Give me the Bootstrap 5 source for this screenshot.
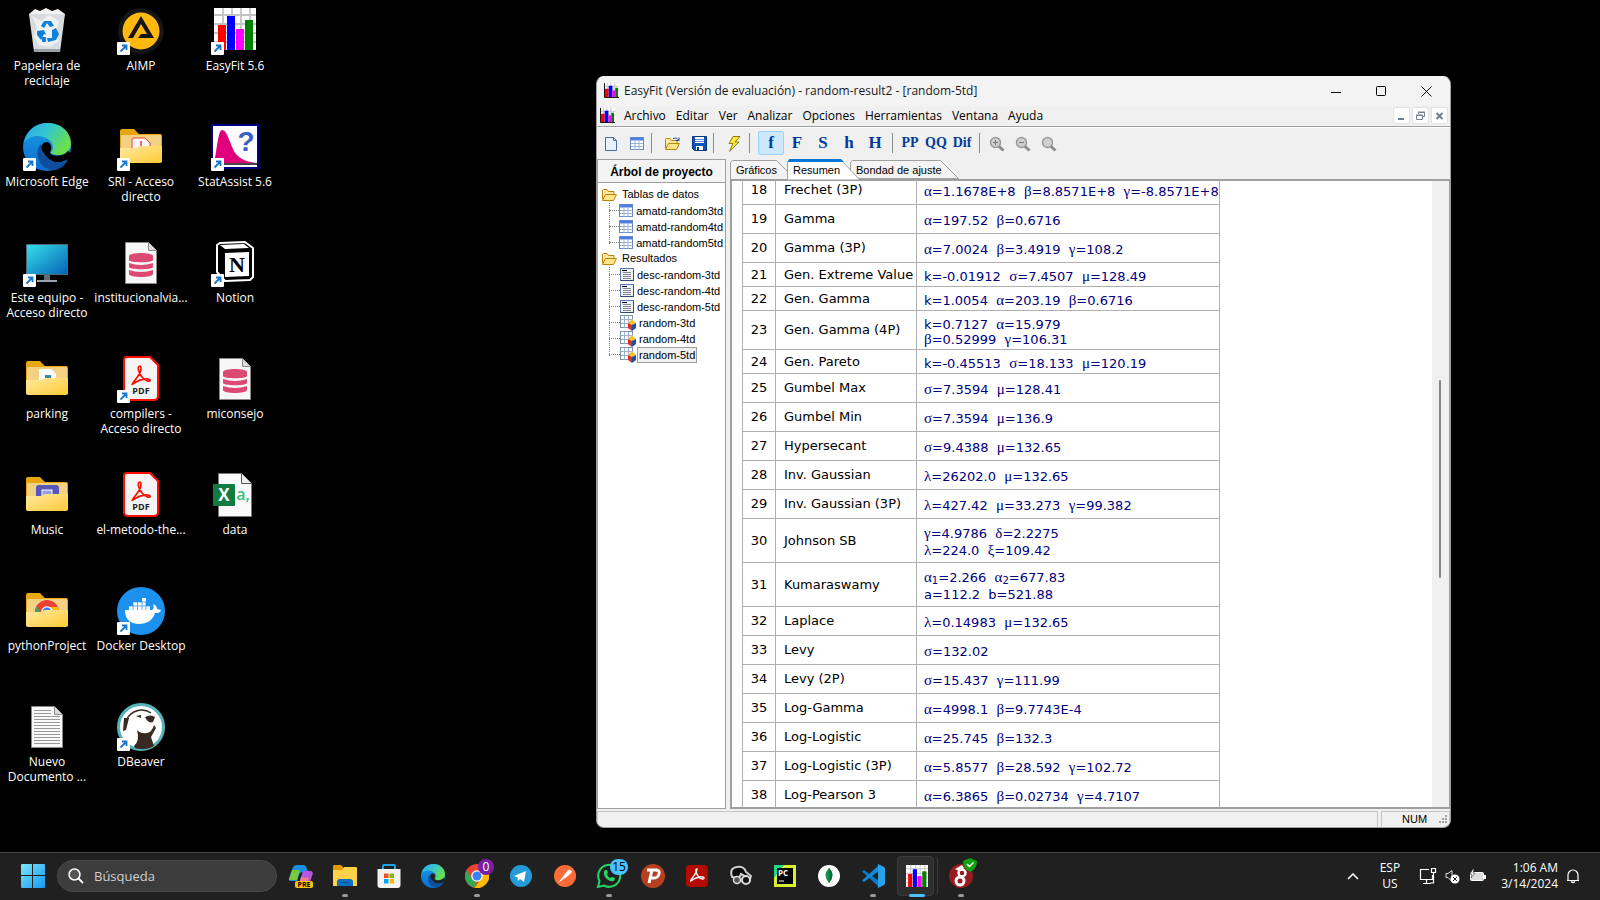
<!DOCTYPE html>
<html lang="es">
<head>
<meta charset="utf-8">
<meta name="viewport" content="width=device-width, initial-scale=1">
<title>EasyFit</title>
<link href="https://cdn.jsdelivr.net/npm/bootstrap@5.3.0/dist/css/bootstrap.min.css" rel="stylesheet">
<style>
  body { background: #000; font-family: "Open Sans", "Noto Sans", sans-serif; font-size: 12px; line-height: 15px; color: #000; }
  button { font: inherit; }
  .flat { border: 0; background: none; padding: 0; color: inherit; }
  /* desktop shortcuts */
  .shortcuts { display: grid; grid-auto-flow: column; grid-template-rows: repeat(7, 116px); grid-auto-columns: 94px; padding-top: 7px; width: max-content; }
  .shortcuts a { color: #fff; text-decoration: none; text-align: center; }
  .shortcuts svg { width: 48px; height: 48px; display: block; margin: 0 auto 3px; }
  .shortcuts .newcol { grid-row-start: 1; }
  .pdflabel { font: bold 9px "Open Sans", sans-serif; text-anchor: middle; fill: #222; }
  /* application window */
  .app { position: absolute; top: 76px; bottom: 24px; left: 37.25%; right: 9.3125%; background: #f0f0f0; border: 1px solid #a0a0a0; border-top-color: #f3f3f3; border-radius: 8px; overflow: hidden; }
  .titlebar { height: 29px; background: #f3f3f3; padding: 0 1px 2px 7px; color: #1a1a1a; gap: 5px; }
  .titlebar .wbtn { width: 45px; height: 27px; }
  .menubar { height: 21px; border-bottom: 1px solid #a0a0a0; padding: 0 2px 0 3px; }
  .menubar .entry { padding: 0 5px; }
  .menubar svg.me-1 { flex: none; }
  .mdis { gap: 2px; }
  .mdi { width: 17px; height: 17px; background: #fff; border: 1px solid #e2e2e2; border-radius: 2px; }
  .tools { height: 32px; border-top: 1px solid #fff; padding: 0 0 1px 1px; }
  .tools button { width: 26px; height: 24px; border: 1px solid transparent; border-radius: 2px; font: bold 17px/20px "Liberation Serif", serif; color: #003c9c; }
  .tools button.on { background: #cce8ff; border-color: #99d1ff; }
  .tools .duo { font-size: 14px; }
  .tools .rule { width: 1px; height: 20px; background: #8c8c8c; margin: 0 4px; }
  .tools .wide { margin: 0 8px 0 1px; }
  .legacy { font-family: "Liberation Sans", Arial, sans-serif; font-size: 11px; }
  .side { width: 129px; border: 1px solid #a0a0a0; background: #fff; margin-right: 4px; flex: none; }
  .side h2 { font-size: 12px; font-weight: bold; height: 23px; line-height: 24px; margin: 0; text-align: center; background: #f4f4f4; border-bottom: 1px solid #a0a0a0; }
  .tree { padding: 4px 0 0; margin: 0; list-style: none; }
  .tree svg { flex: none; }
  .tree .row16 { height: 16px; display: flex; align-items: center; white-space: nowrap; }
  .tree .branch { padding-left: 3px; gap: 5px; }
  .tree ul { margin: 0 0 0 11px; padding: 0; list-style: none; position: relative; }
  .tree ul::before { content: ""; position: absolute; left: 0; top: 0; bottom: 7px; border-left: 1px dotted #808080; }
  .tree ul li::before { content: ""; width: 11px; border-top: 1px dotted #808080; }
  .tree .leaf { padding: 0 1px; margin-left: 1px; line-height: 14px; border: 1px solid transparent; }
  .tree .leaf.on { background: #f0f0f0; border-color: #a0a0a0; }
  .tree svg + .leaf { flex: none; }
  .tabrow { height: 20px; }
  .tabrow button { position: relative; height: 20px; text-align: left; padding: 3px 0 0 6px; }
  .tabrow svg { position: absolute; left: 0; top: 0; overflow: visible; }
  .tabrow span { position: relative; }
  .t1 { width: 57px; } .t2 { width: 63px; } .t3 { width: 108px; }
  .sheet { border: 2px solid #a0a0a0; border-right-width: 1px; background: #fff; min-height: 0; }
  .view { overflow: hidden; padding-left: 10px; }
  .track { width: 17px; background: #f0f0f0; padding: 199px 8px 0 7px; flex: none; }
  .track div { height: 198px; background: #858585; border-radius: 1px; }
  /* result table, scrolled down to row 18 */
  .results { width: 478px; table-layout: fixed; margin-top: -6px; border-collapse: collapse; font: 13px/15px "DejaVu Sans", sans-serif; }
  .results td { border: 1px solid #b0b0b0; height: 29px; padding: 0 0 0 8px; vertical-align: middle; white-space: nowrap; }
  .results .c1 { width: 33px; } .results .c2 { width: 141px; }
  .results td:first-child { text-align: center; padding: 0; }
  .results td:last-child { color: #000080; padding: 4px 0 0 7px; white-space: pre; }
  .results i { font: 15px/15px "Liberation Serif", serif; }
  .results .low td { height: 24px; }
  .results .mid td { height: 39px; }
  .results .tall td { height: 44px; }
  .results .tall td:last-child { line-height: 17px; }
  .results sub { font-size: 10px; line-height: 0; bottom: -2px; }
  .status { height: 18px; padding-top: 2px; gap: 3px; }
  .status div { border: 1px solid #c4c4c4; height: 17px; line-height: 15px; }
  .status .keys { width: 69px; padding-left: 20px; }
  /* taskbar */
  .taskbar { height: 48px; background: #202020; border-top: 1px solid #444; color: #fff; flex: none; padding: 0 16px 1px 17px; }
  .search { width: 220px; height: 32px; background: #3c3c3c; border: 1px solid #4a4a4a; border-radius: 16px; padding: 0 10px; margin-right: 2px; gap: 10px; }
  .search input { background: none; border: 0; outline: 0; color: #fff; font-size: 13px; width: 160px; }
  .search input::placeholder { color: #cfcfcf; opacity: 1; }
  .task { width: 44px; height: 46px; position: relative; }
  .task svg { width: 24px; height: 24px; overflow: visible; }
  .task.run::after { content: ""; position: absolute; left: 19px; bottom: 2px; width: 6px; height: 3px; border-radius: 2px; background: #9a9a9a; }
  .task.cur::after { left: 14px; width: 16px; background: #4cc2ff; }
  .task.cur::before { content: ""; position: absolute; inset: 3px 5px 3px 2px; background: #2d2d2d; border: 1px solid #3a3a3a; border-radius: 4px; box-shadow: 4px 0 0 -1px #202020, 5px 0 0 -1px #3a3a3a; }
  .task.cur svg { position: relative; }
  .count { position: absolute; top: 6px; left: 23px; min-width: 16px; height: 16px; line-height: 16px; border-radius: 8px; font-size: 12px; }
  .count.purple { background: #7a1fa2; }
  .count.sky { background: #4cc2ff; color: #000; min-width: 18px; }
  .hidden-icons { margin-right: 21px; }
  .tray { gap: 8px; margin: 0 15px 0 19px; }
  .stamp { line-height: 16px; }
</style>
</head>
<body class="vh-100 d-flex flex-column overflow-hidden">

<svg width="0" height="0" class="position-absolute" aria-hidden="true">
  <defs>
    <linearGradient id="gFold" x1="0" y1="0" x2="1" y2="1"><stop offset="0" stop-color="#ffe9a3"/><stop offset="1" stop-color="#ffcb33"/></linearGradient>
    <linearGradient id="gScr" x1="0" y1="0" x2="1" y2="1"><stop offset="0" stop-color="#35e0ea"/><stop offset="1" stop-color="#0762b4"/></linearGradient>
    <linearGradient id="gWin" x1="0" y1="0" x2="1" y2="1"><stop offset="0" stop-color="#7ee8fb"/><stop offset="1" stop-color="#1298f0"/></linearGradient>
    <linearGradient id="gEdgeTop" x1="0" y1="0" x2="1" y2=".5"><stop offset="0" stop-color="#2aa7e8"/><stop offset=".5" stop-color="#34c6d0"/><stop offset="1" stop-color="#6be04a"/></linearGradient>
    <linearGradient id="gEdge" x1="0" y1="0" x2="0" y2="1"><stop offset="0" stop-color="#1b9de2"/><stop offset="1" stop-color="#0a6cd0"/></linearGradient>
  </defs>
  <symbol id="arrow" viewBox="0 0 48 48"><rect y="35" width="13" height="13" rx="1" fill="#fff"/><path d="M3.500 44.500 9 39M5 38.500h4.500V43" fill="none" stroke="#1677cc" stroke-width="1.800"/></symbol>
  <symbol id="bars" viewBox="3 1 42 42"><rect x="3" y="1" width="42" height="42" fill="#fff"/><path d="M12 1v42M21 1v42M30 1v42M39 1v42M3 8h42M3 17h42M3 26h42M3 35h42" stroke="#c4c4c4" stroke-width="1.800"/><rect x="7" y="18" width="8" height="25" fill="#f00"/><rect x="16" y="9" width="8" height="34" fill="#00f"/><rect x="25" y="22" width="8" height="21" fill="#f0f"/><rect x="34" y="13" width="8" height="30" fill="#008000"/></symbol>
  <symbol id="minibars" viewBox="0 0 16 16"><rect width="16" height="16" fill="#fff"/><path d="M3.500 0v16M7.500 0v16M11.500 0v16M0 3.500h16M0 7.500h16" stroke="#c4c4c4"/><path d="M.5 0v15.500H16" fill="none" stroke="#000"/><path d="M1 6h4v9H1z" fill="#f00"/><path d="M5 3h4v12H5z" fill="#00f"/><path d="M9 8h3v7H9z" fill="#f0f"/><path d="M12 5h3v10h-3z" fill="#008000"/></symbol>
  <symbol id="edge" viewBox="0 0 48 48"><circle cx="24" cy="24" r="24" fill="url(#gEdge)"/><path d="M1 20C4 7 13 0 25 0c14 0 23 10 23 20 0 8-6 12-12 12-5 0-9-1-8-3 4-4 2-11-5-14C15 11 5 13 1 20z" fill="url(#gEdgeTop)"/><path d="M19 22c2-4 8-4 9 1 1 4-1 5-1 7 3 4 13 4 18-2l3 2-3 6c-8 5-20 5-25-4-2-4-3-7-1-10z" fill="#000"/><path d="M18 21c-8 8-2 27 14 26 6-1 9-4 13-10-5 3-15 4-21-3-4-4-6-8-6-13z" fill="#0f4e9c"/></symbol>
  <symbol id="edgebar" viewBox="0 0 48 48"><circle cx="24" cy="24" r="24" fill="url(#gEdge)"/><path d="M1 20C4 7 13 0 25 0c14 0 23 10 23 20 0 8-6 12-12 12-5 0-9-1-8-3 4-4 2-11-5-14C15 11 5 13 1 20z" fill="url(#gEdgeTop)"/><path d="M19 22c2-4 8-4 9 1 1 4-1 5-1 7 3 4 13 4 18-2l3 2-3 6c-8 5-20 5-25-4-2-4-3-7-1-10z" fill="#202020"/><path d="M18 21c-8 8-2 27 14 26 6-1 9-4 13-10-5 3-15 4-21-3-4-4-6-8-6-13z" fill="#0f4e9c"/></symbol>
  <symbol id="chrome" viewBox="0 0 24 24"><circle cx="12" cy="12" r="12" fill="#ea4335"/><path d="M1.600 6 7 15l5 2-3 6.700A12 12 0 0 1 1.600 6z" fill="#34a853"/><path d="M12 7h11a12 12 0 0 1-13.500 16.800L16.500 14z" fill="#fbbc04"/><circle cx="12" cy="12" r="5.800" fill="#fff"/><circle cx="12" cy="12" r="4.500" fill="#3b82f0"/></symbol>
  <symbol id="fback" viewBox="0 0 48 48"><path d="M3 8q0-2 2-2h12l5 5h21q2 0 2 2v26H3z" fill="#e7a510"/><rect x="4" y="12" width="40" height="20" rx="1" fill="#f3d182"/></symbol>
  <symbol id="ffront" viewBox="0 0 48 48"><path d="M3 25h15l4-2h23v15q0 2-2 2H5q-2 0-2-2z" fill="url(#gFold)"/></symbol>
  <symbol id="db" viewBox="0 0 48 48"><path d="M8.500 3.500h23l8 8v33h-31z" fill="#f7f7f8" stroke="#888"/><path d="M31.500 3.500v8h8" fill="#dcdcdc" stroke="#888"/><g fill="#dc4a74"><path d="M12 17c0-4 24-4 24 0v4c0 3-24 3-24 0z"/><path d="M12 24q12 4 24 0v4c0 3-24 3-24 0z"/><path d="M12 31q12 4 24 0v4c0 4-24 4-24 0z"/></g></symbol>
  <symbol id="pdf" viewBox="0 0 48 48"><path d="M10 2h23l8 8v31q0 4-4 4H11q-4 0-4-4V5q0-3 3-3z" fill="#f5f5f5" stroke="#fa0f00" stroke-width="2"/><path d="M23 11c-3 0-2 6 2 11s9 5 8 3-9-1-14 2-4 3-3 1 8-9 8-14c0-2 0-3-1-3z" fill="none" stroke="#fa0f00" stroke-width="1.700"/></symbol>
  <symbol id="tfolder" viewBox="0 0 16 16"><path d="M1.500 12.500V3.500q0-1 1-1H6l1.500 2H13v3" fill="#ffe9a0" stroke="#b8860b"/><path d="M1.500 13.500 4.500 7.500h11l-3 6z" fill="#ffe48a" stroke="#b8860b"/></symbol>
  <symbol id="tgrid" viewBox="0 0 14 14"><rect x=".5" y=".5" width="13" height="12" fill="#fff" stroke="#6a8bc4"/><path d="M1 2h12" stroke="#4f7fe0" stroke-width="3"/><path d="M1 6.500h12M1 9.500h12M5 4v9M9 4v9" stroke="#9db3d8"/></symbol>
  <symbol id="tdesc" viewBox="0 0 14 14"><rect x=".5" y=".5" width="13" height="12" fill="#eef2fc" stroke="#5a76ae"/><path d="M13.500 2v10.500H1" fill="none" stroke="#34496f"/><path d="M2 2.500h5" stroke="#000"/><path d="M3 4.500h8M3 6.500h8M3 8.500h8M3 10.500h8" stroke="#888"/></symbol>
  <symbol id="tres" viewBox="0 0 16 16"><rect x=".5" y=".5" width="12" height="12" fill="#fff" stroke="#7d92b5"/><path d="M1 4.500h12M1 8.500h12M4.500 1v12M8.500 1v12" stroke="#9db0d0"/><path d="m8 8 4-4 4 4-4 2z" fill="#f2c230"/><path d="m8 8 4 2v6l-4-3z" fill="#d92f1c"/><path d="m16 8-4 2v6l4-3z" fill="#1d4fa8"/></symbol>
  <symbol id="lens" viewBox="0 0 16 16"><path d="m9.500 10 5 4.500" stroke="#8b8b8b" stroke-width="3"/><circle cx="6.500" cy="6.500" r="5" fill="#d0d0d0" stroke="#9a9a9a" stroke-width="1.500"/></symbol>
</svg>

<main class="position-relative flex-grow-1">
  <nav class="shortcuts" aria-label="Escritorio">
    <a href="#"><svg viewBox="0 0 48 48"><path d="M6 7 12 2l5 2 6-3 6 3 6-2 7 5-3 4H9z" fill="#f2f2f2"/><path d="M6 7h36l-5 38H11z" fill="#d9dcdf"/><path d="m9 9 9 5 8-6 10 6-3 12 3 8-9 6-11-2-5-8 3-9z" fill="#eef0f2"/><path d="M11 42h26v3H11z" fill="#9ca1a6"/><g fill="#0b80dc"><path d="m18 19 3-5h7l3 5-4 1-3-4-3 5z"/><path d="m14 24 7-1 2 5-2-1-3 6-4-5z"/><path d="m29 23 4-2 3 6-3 6-8 2-1-4h5z"/><path d="M19 30h4v5h-4z"/></g></svg>Papelera de<br>reciclaje</a>
    <a href="#"><svg viewBox="0 0 48 48"><use href="#edge"/><use href="#arrow"/></svg>Microsoft Edge</a>
    <a href="#"><svg viewBox="0 0 48 48"><rect x="3.500" y="5.500" width="41" height="30" fill="url(#gScr)" stroke="#4c6a7c"/><path d="M21 36h6v6h-6z" fill="#5f6f7a"/><path d="M14 41h20v2H14z" fill="#99a3ab"/><use href="#arrow"/></svg>Este equipo -<br>Acceso directo</a>
    <a href="#"><svg viewBox="0 0 48 48"><use href="#fback"/><path d="M16 14h12l5 5v10H16z" fill="#fff"/><path d="M22 20h6v8h-6z" fill="#3d87a3"/><use href="#ffront"/></svg>parking</a>
    <a href="#"><svg viewBox="0 0 48 48"><use href="#fback"/><rect x="13" y="14" width="23" height="17" rx="3" fill="#5558b8"/><rect x="19" y="19" width="10" height="8" fill="#9a9ce6" stroke="#fff"/><use href="#ffront"/></svg>Music</a>
    <a href="#"><svg viewBox="0 0 48 48"><use href="#fback"/><use href="#chrome" x="12" y="13" width="24" height="24"/><use href="#ffront"/></svg>pythonProject</a>
    <a href="#"><svg viewBox="0 0 48 48"><path d="M8.500 3.500h23l8 8v33h-31z" fill="#fafafa" stroke="#888"/><path d="M31.500 3.500v8h8" fill="#dcdcdc" stroke="#888"/><path d="M11 7.500h17M11 10.500h17M11 13.500h26M11 16.500h26M11 19.500h26M11 22.500h26M11 25.500h26M11 28.500h26M11 31.500h26M11 34.500h26M11 37.500h26M11 40.500h26" stroke="#999"/></svg>Nuevo<br>Documento ...</a>

    <a href="#" class="newcol"><svg viewBox="0 0 48 48"><circle cx="24" cy="24" r="23" fill="#151515"/><circle cx="24" cy="24" r="18.500" fill="#ffb810"/><path d="m24 9 13 22H21l3-4h6l-6-10-8 14h-5z" fill="#151515"/><use href="#arrow"/></svg>AIMP</a>
    <a href="#"><svg viewBox="0 0 48 48"><use href="#fback"/><path d="M15 28V17q0-2 2-2h11l5 5v8z" fill="#f8f8f8" stroke="#f33c30"/><path d="M24 18v6l-5 3m5-3 6 1" fill="none" stroke="#f33c30" stroke-width="1.500"/><use href="#ffront"/><use href="#arrow"/></svg>SRI - Acceso<br>directo</a>
    <a href="#"><svg><use href="#db"/></svg>institucionalvia...</a>
    <a href="#"><svg viewBox="0 0 48 48"><use href="#pdf"/><text class="pdflabel" x="24" y="39">PDF</text><use href="#arrow"/></svg>compilers -<br>Acceso directo</a>
    <a href="#"><svg viewBox="0 0 48 48"><use href="#pdf"/><text class="pdflabel" x="24" y="39">PDF</text></svg>el-metodo-the...</a>
    <a href="#"><svg viewBox="0 0 48 48"><circle cx="24" cy="24" r="24" fill="#1d91ee"/><path d="M8 23h27c2-1 2-3 1-6 3 1 4 3 4 5l4 1c-1 3-3 3-6 3-2 7-8 11-16 11-9 0-14-5-14-14z" fill="#fff"/><path d="M12 19h21v4H12zM16 15h13v4H16zM25 11h4v4h-4z" fill="#fff"/><path d="M12 19h21M16 15h13M16 14v9M20.500 14v9M25 14v9M29 14v9" stroke="#1d91ee" stroke-width=".7"/><use href="#arrow"/></svg>Docker Desktop</a>
    <a href="#"><svg viewBox="0 0 48 48"><circle cx="24" cy="24" r="22.500" fill="#fff" stroke="#55b5ba" stroke-width="3"/><path d="M10 16c4-8 15-12 24-6" fill="none" stroke="#382923" stroke-width="1.500"/><path d="M7 15h5l-3 12-3 1zM28 14q6-3 10 0l-2 5q-5 2-8-5zM19 13l5-1v3zM20 27q4 4 10 3 5-1 7-8l2 3-5 9 3 9q-6 4-13 3-7 0-7-3 6-5 3-16z" fill="#382923"/><use href="#arrow"/></svg>DBeaver</a>

    <a href="#" class="newcol"><svg viewBox="0 0 48 48"><use href="#bars" x="3" y="1" width="42" height="42"/><use href="#arrow"/></svg>EasyFit 5.6</a>
    <a href="#"><svg viewBox="0 0 48 48"><rect x="1" y="2" width="46" height="43" fill="#fff" stroke="#000080" stroke-width="2"/><path d="M3 40C6 28 7 7 11 7c6 0 8 17 15 25 6 6 12 7 20 8z" fill="#e0007c"/><path d="M3 41h43" stroke="#444" stroke-width="2"/><text x="35" y="28" font-family="Liberation Sans, sans-serif" font-size="28" font-weight="bold" text-anchor="middle" fill="#3a5fc4">?</text><use href="#arrow"/></svg>StatAssist 5.6</a>
    <a href="#"><svg viewBox="0 0 48 48"><path d="m6 6 3-2 25-1 8 6v29l-3 3-25 1-8-9z" fill="#000" stroke="#fff" stroke-width="2" stroke-linejoin="round"/><path d="m9 6 24-1 5 4-24 1zM14 14l24-1v24l-24 1z" fill="#fff"/><text x="26" y="33" font-family="Liberation Serif, serif" font-size="22" font-weight="bold" text-anchor="middle">N</text><use href="#arrow"/></svg>Notion</a>
    <a href="#"><svg><use href="#db"/></svg>miconsejo</a>
    <a href="#"><svg viewBox="0 0 48 48"><path d="M7.500 2.500h23l10 10v33h-33z" fill="#fafafa" stroke="#777"/><path d="M30.500 2.500v10h10" fill="#eee" stroke="#555"/><rect x="2" y="13" width="22" height="22" rx="1" fill="#107c41"/><text x="13" y="30" font-family="Open Sans, sans-serif" font-size="17" font-weight="bold" text-anchor="middle" fill="#fff">X</text><text x="32" y="29" font-family="Open Sans, sans-serif" font-size="16" font-weight="600" text-anchor="middle" fill="#33c481">a,</text></svg>data</a>
  </nav>

  <section class="app d-flex flex-column">
    <header class="titlebar d-flex align-items-center">
      <svg width="15" height="15"><use href="#minibars"/></svg>
      <span class="me-auto">EasyFit (Versión de evaluación) - random-result2 - [random-5td]</span>
      <div class="d-flex">
        <button class="flat wbtn" aria-label="Minimizar"><svg width="11" height="11"><path d="M0 6.500h10" stroke="#000"/></svg></button>
        <button class="flat wbtn" aria-label="Maximizar"><svg width="11" height="11"><rect x=".5" y=".5" width="9" height="9" rx="1" fill="none" stroke="#000"/></svg></button>
        <button class="flat wbtn" aria-label="Cerrar"><svg width="11" height="11"><path d="m.5.500 10 10m0-10-10 10" stroke="#000"/></svg></button>
      </div>
    </header>
    <nav class="menubar d-flex align-items-center">
      <svg width="15" height="15" class="me-1"><use href="#minibars"/></svg>
      <button class="flat entry">Archivo</button><button class="flat entry">Editar</button><button class="flat entry">Ver</button><button class="flat entry">Analizar</button><button class="flat entry">Opciones</button><button class="flat entry">Herramientas</button><button class="flat entry">Ventana</button><button class="flat entry me-auto">Ayuda</button>
      <div class="mdis d-flex">
        <button class="mdi p-0 d-flex" aria-label="Minimizar documento"><svg width="15" height="15"><path d="M4 11h6" stroke="#708090" stroke-width="2"/></svg></button>
        <button class="mdi p-0 d-flex" aria-label="Restaurar documento"><svg width="15" height="15"><path d="M5.500 6V4.500h6v4H10M3.500 7.500h6v4h-6zM5 4h7M3 7h7" fill="none" stroke="#708090"/></svg></button>
        <button class="mdi p-0 d-flex" aria-label="Cerrar documento"><svg width="15" height="15"><path d="m4.500 5 6 6m0-6-6 6" stroke="#708090" stroke-width="2"/></svg></button>
      </div>
    </nav>
    <div class="tools d-flex align-items-center" role="toolbar">
      <button class="flat" aria-label="Nuevo"><svg width="14" height="16"><path d="M1.500 1.500h8l3 3v10h-11z" fill="#eaf2ff" stroke="#4a6fa8"/><path d="M9.500 1.500v3h3" fill="none" stroke="#4a6fa8"/></svg></button>
      <button class="flat" aria-label="Tabla"><svg width="14" height="14"><use href="#tgrid"/></svg></button>
      <span class="rule wide"></span>
      <button class="flat" aria-label="Abrir"><svg width="18" height="16"><use href="#tfolder" width="16" height="16"/><path d="M9 2.500q4-2 6 2m0-3v3h-3" fill="none" stroke="#1c4a80"/></svg></button>
      <button class="flat" aria-label="Guardar"><svg width="15" height="15"><path d="M.5.500h14v14h-12l-2-2z" fill="#0b55b8" stroke="#06367c"/><path d="M3 1h9v6H3z" fill="#fff"/><path d="M3 3.500h9M3 5.500h9" stroke="#6b8fc8"/><path d="M4 10h7v4H4z" fill="#fff"/><path d="M5 11h2v3H5z" fill="#06367c"/></svg></button>
      <span class="rule wide"></span>
      <button class="flat" aria-label="Ajustar"><svg width="14" height="16"><path d="m5 .5-4 7h4l-3.500 8L11 6H7l5-5.500z" fill="#ffe838" stroke="#8d7a10"/></svg></button>
      <span class="rule wide"></span>
      <button class="flat on">f</button><button class="flat">F</button><button class="flat">S</button><button class="flat">h</button><button class="flat">H</button>
      <span class="rule"></span>
      <button class="flat duo">PP</button><button class="flat duo">QQ</button><button class="flat duo">Dif</button>
      <span class="rule"></span>
      <button class="flat" aria-label="Acercar"><svg width="16" height="16"><use href="#lens"/><path d="M4 6.500h5M6.500 4v5" stroke="#777"/></svg></button>
      <button class="flat" aria-label="Alejar"><svg width="16" height="16"><use href="#lens"/><path d="M4 6.500h5" stroke="#777"/></svg></button>
      <button class="flat" aria-label="Ajustar zoom"><svg width="16" height="16"><use href="#lens"/></svg></button>
    </div>
    <div class="d-flex flex-grow-1 legacy overflow-hidden">
      <aside class="side overflow-hidden">
        <h2>Árbol de proyecto</h2>
        <ul class="tree m-0 ps-0">
          <li><div class="row16 branch"><svg width="16" height="16"><use href="#tfolder"/></svg>Tablas de datos</div>
            <ul>
              <li class="row16"><svg width="14" height="14"><use href="#tgrid"/></svg><span class="leaf">amatd-random3td</span></li>
              <li class="row16"><svg width="14" height="14"><use href="#tgrid"/></svg><span class="leaf">amatd-random4td</span></li>
              <li class="row16"><svg width="14" height="14"><use href="#tgrid"/></svg><span class="leaf">amatd-random5td</span></li>
            </ul>
          </li>
          <li><div class="row16 branch"><svg width="16" height="16"><use href="#tfolder"/></svg>Resultados</div>
            <ul>
              <li class="row16"><svg width="14" height="14"><use href="#tdesc"/></svg><span class="leaf">desc-random-3td</span></li>
              <li class="row16"><svg width="14" height="14"><use href="#tdesc"/></svg><span class="leaf">desc-random-4td</span></li>
              <li class="row16"><svg width="14" height="14"><use href="#tdesc"/></svg><span class="leaf">desc-random-5td</span></li>
              <li class="row16"><svg width="16" height="16"><use href="#tres"/></svg><span class="leaf">random-3td</span></li>
              <li class="row16"><svg width="16" height="16"><use href="#tres"/></svg><span class="leaf">random-4td</span></li>
              <li class="row16"><svg width="16" height="16"><use href="#tres"/></svg><span class="leaf on">random-5td</span></li>
            </ul>
          </li>
        </ul>
      </aside>
      <div class="d-flex flex-column flex-grow-1">
        <div class="tabrow d-flex" role="tablist">
          <button class="flat t1" role="tab"><svg width="57" height="20"><path d="M.5 20V3.500l2-2h44l12 12" fill="#f4f4f4" stroke="#a0a0a0"/></svg><span>Gráficos</span></button>
          <button class="flat t2 z-1" role="tab" aria-selected="true"><svg width="72" height="21"><path d="M.5 21V2.500l2-2h51L72 20v1z" fill="#fff" stroke="#a0a0a0"/><path d="M1 2.500 2.500 0H54l3 3H1z" fill="#0078d7"/></svg><span>Resumen</span></button>
          <button class="flat t3" role="tab"><svg width="108" height="20"><path d="M.5 13V3.500l2-2h88l18 18H6" fill="#f4f4f4" stroke="#a0a0a0"/></svg><span>Bondad de ajuste</span></button>
        </div>
        <div class="sheet d-flex flex-grow-1">
          <div class="view flex-grow-1">
            <table class="results">
              <colgroup><col class="c1"><col class="c2"><col></colgroup>
              <tr><td>18</td><td>Frechet (3P)</td><td><i>α</i>=1.1678E+8  <i>β</i>=8.8571E+8  <i>γ</i>=-8.8571E+8</td></tr>
              <tr><td>19</td><td>Gamma</td><td><i>α</i>=197.52  <i>β</i>=0.6716</td></tr>
              <tr><td>20</td><td>Gamma (3P)</td><td><i>α</i>=7.0024  <i>β</i>=3.4919  <i>γ</i>=108.2</td></tr>
              <tr class="low"><td>21</td><td>Gen. Extreme Value</td><td>k=-0.01912  <i>σ</i>=7.4507  <i>μ</i>=128.49</td></tr>
              <tr class="low"><td>22</td><td>Gen. Gamma</td><td>k=1.0054  <i>α</i>=203.19  <i>β</i>=0.6716</td></tr>
              <tr class="mid"><td>23</td><td>Gen. Gamma (4P)</td><td>k=0.7127  <i>α</i>=15.979<br><i>β</i>=0.52999  <i>γ</i>=106.31</td></tr>
              <tr class="low"><td>24</td><td>Gen. Pareto</td><td>k=-0.45513  <i>σ</i>=18.133  <i>μ</i>=120.19</td></tr>
              <tr><td>25</td><td>Gumbel Max</td><td><i>σ</i>=7.3594  <i>μ</i>=128.41</td></tr>
              <tr><td>26</td><td>Gumbel Min</td><td><i>σ</i>=7.3594  <i>μ</i>=136.9</td></tr>
              <tr><td>27</td><td>Hypersecant</td><td><i>σ</i>=9.4388  <i>μ</i>=132.65</td></tr>
              <tr><td>28</td><td>Inv. Gaussian</td><td><i>λ</i>=26202.0  <i>μ</i>=132.65</td></tr>
              <tr><td>29</td><td>Inv. Gaussian (3P)</td><td><i>λ</i>=427.42  <i>μ</i>=33.273  <i>γ</i>=99.382</td></tr>
              <tr class="tall"><td>30</td><td>Johnson SB</td><td><i>γ</i>=4.9786  <i>δ</i>=2.2275<br><i>λ</i>=224.0  <i>ξ</i>=109.42</td></tr>
              <tr class="tall"><td>31</td><td>Kumaraswamy</td><td><i>α</i><sub>1</sub>=2.266  <i>α</i><sub>2</sub>=677.83<br>a=112.2  b=521.88</td></tr>
              <tr><td>32</td><td>Laplace</td><td><i>λ</i>=0.14983  <i>μ</i>=132.65</td></tr>
              <tr><td>33</td><td>Levy</td><td><i>σ</i>=132.02</td></tr>
              <tr><td>34</td><td>Levy (2P)</td><td><i>σ</i>=15.437  <i>γ</i>=111.99</td></tr>
              <tr><td>35</td><td>Log-Gamma</td><td><i>α</i>=4998.1  <i>β</i>=9.7743E-4</td></tr>
              <tr><td>36</td><td>Log-Logistic</td><td><i>α</i>=25.745  <i>β</i>=132.3</td></tr>
              <tr><td>37</td><td>Log-Logistic (3P)</td><td><i>α</i>=5.8577  <i>β</i>=28.592  <i>γ</i>=102.72</td></tr>
              <tr><td>38</td><td>Log-Pearson 3</td><td><i>α</i>=6.3865  <i>β</i>=0.02734  <i>γ</i>=4.7107</td></tr>
            </table>
          </div>
          <div class="track"><div></div></div>
        </div>
      </div>
    </div>
    <footer class="status legacy d-flex">
      <div class="flex-grow-1"></div>
      <div class="keys d-flex align-items-center justify-content-between"><span>NUM</span><svg width="12" height="12"><path d="M8 2h2M5 5h2M8 5h2M2 8h2M5 8h2M8 8h2" stroke="#a0a0a0" stroke-width="2"/></svg></div>
    </footer>
  </section>
</main>

<footer class="taskbar d-flex align-items-center">
  <button class="flat me-2 px-1 d-flex" aria-label="Inicio"><svg width="24" height="24" viewBox="0 0 24 24"><path d="M1 0h10v11H0V1q0-1 1-1zM12 0h11q1 0 1 1v10H12zM0 12h11v12H1q-1 0-1-1zM12 12h12v11q0 1-1 1H12z" fill="url(#gWin)"/></svg></button>
  <label class="search d-flex align-items-center"><svg width="16" height="16"><circle cx="6.500" cy="6.500" r="5.500" fill="#555" stroke="#fff" stroke-width="1.500"/><path d="m10.500 10.500 4.500 4.500" stroke="#fff" stroke-width="1.800"/></svg><input type="text" placeholder="Búsqueda" aria-label="Búsqueda" class="p-0"></label>
  <div class="d-flex me-auto">
    <button class="flat task" aria-label="Copilot"><svg viewBox="0 0 24 24"><path d="M0 15 4 3q1-2 4-2h6q3 0 4 4l1 3h-5q-3 0-4 3l-2 6H3q-4 0-3-2z" fill="#1b8fe0"/><path d="M0 15 3 6h8l-3 10H3q-4 0-3-1z" fill="#78c840"/><path d="m14 7 8 0q3 1 1 5l-2 6h-8l-3 1z" fill="#b657e0"/><path d="m12 13 8 1-2 5h-7z" fill="#f07a88"/><rect x="6" y="17" width="18" height="7" rx="2" fill="#ffc20a"/><text x="15" y="23" font-family="Open Sans, sans-serif" font-size="7" font-weight="bold" text-anchor="middle">PRE</text></svg></button>
    <button class="flat task run" aria-label="Explorador"><svg viewBox="0 0 24 24"><path d="M0 2q0-1 1-1h7l2 2v3H0z" fill="#e09a00"/><path d="M0 6h9l2-3h12q1 0 1 1v18H0z" fill="#ffd04a"/><path d="M4 22v-4q0-3 3-3h10q3 0 3 3v4z" fill="#0f6fc0"/><path d="M8 18.500h8" stroke="#0a4c90"/></svg></button>
    <button class="flat task" aria-label="Store"><svg viewBox="0 0 24 24"><path d="M6 6V2q0-1 1-1h10q1 0 1 1v4" fill="none" stroke="#19a5e8" stroke-width="2"/><path d="M.5 5h23v16q0 3-3 3h-17q-3 0-3-3z" fill="#f2f2f2"/><path d="M7 9.500h4.500V14H7z" fill="#f25022"/><path d="M12.500 9.500H17V14h-4.500z" fill="#7fba00"/><path d="M7 15h4.500v4.500H7z" fill="#00a4ef"/><path d="M12.500 15H17v4.500h-4.500z" fill="#ffb900"/></svg></button>
    <button class="flat task" aria-label="Edge"><svg><use href="#edgebar"/></svg></button>
    <button class="flat task run" aria-label="Chrome"><svg><use href="#chrome"/></svg><span class="count purple">0</span></button>
    <button class="flat task" aria-label="Telegram"><svg viewBox="0 0 24 24"><circle cx="12" cy="12" r="11" fill="#259bd8"/><path d="m5 12 12-5-2 11-4-3-2 2-.5-3.500z" fill="#fff"/></svg></button>
    <button class="flat task" aria-label="Postman"><svg viewBox="0 0 24 24"><circle cx="12" cy="12" r="11" fill="#ff6c37"/><path d="m5 19 7-9 3 2zM12 10l3-4q3-1 4 2l-4 4z" fill="#fff"/></svg></button>
    <button class="flat task run" aria-label="WhatsApp"><svg viewBox="0 0 24 24"><path d="m1 23 1.500-6A11 11 0 1 1 7 21.500z" fill="#202020" stroke="#25d366" stroke-width="2"/><path d="M8 6c-4 4 3 13 9 11l1-3-3-1-2 1q-3-2-3-4l1-1-1-3z" fill="#25d366"/></svg><span class="count sky">15</span></button>
    <button class="flat task" aria-label="PSeInt"><svg viewBox="0 0 24 24"><circle cx="12" cy="12" r="12" fill="#b5401f"/><path d="M8 19 11 6M6 6h9q4 0 3 4t-5 4H9" fill="none" stroke="#fff" stroke-width="3"/></svg></button>
    <button class="flat task" aria-label="Acrobat"><svg viewBox="0 0 24 24"><rect x="1" y="1" width="22" height="22" rx="4" fill="#b30b00"/><path d="M12 5c-2 0-1 4 1 7s6 4 6 2-7-1-10 1-4 3-3 1 6-7 6-11z" fill="none" stroke="#fff" stroke-width="1.400"/></svg></button>
    <button class="flat task" aria-label="Visor"><svg viewBox="0 0 24 24"><path d="M3 13Q0 4 8 3q7-1 9 5l5 4-1 3-9-5-2 4z" fill="#0c0c0c" stroke="#ccc" stroke-width="2"/><circle cx="8" cy="16" r="3.500" fill="#555" stroke="#ddd" stroke-width="1.500"/><circle cx="17" cy="16" r="4" fill="#111" stroke="#ddd" stroke-width="2"/></svg></button>
    <button class="flat task" aria-label="PyCharm"><svg viewBox="0 0 24 24"><rect x="1" y="1" width="22" height="22" fill="#d8ee2e"/><path d="M1 1h10L1 14z" fill="#21d789"/><rect x="4" y="4" width="16" height="16"/><text x="5" y="12" font-family="Open Sans, sans-serif" font-size="8" font-weight="bold" fill="#fff">PC</text><path d="M6 17h5" stroke="#fff"/></svg></button>
    <button class="flat task" aria-label="MongoDB"><svg viewBox="0 0 24 24"><circle cx="12" cy="12" r="11" fill="#fff"/><path d="M12 4q7 7 0 15-7-8 0-15z" fill="#12924f"/><path d="M12 4q7 7 0 15z" fill="#0c6b3c"/></svg></button>
    <button class="flat task run" aria-label="Code"><svg viewBox="0 0 24 24"><path d="M1 7.500 3 6l15 11v6z" fill="#0a78c4"/><path d="M1 16.500 3 18 18 7V1z" fill="#1688d8"/><path d="m17 0 6 3q1 1 1 2v14q0 1-1 2l-6 3z" fill="#29a2ec"/></svg></button>
    <button class="flat task run cur" aria-label="EasyFit"><svg viewBox="0 0 24 24"><use href="#bars" x="1" y="1" width="22" height="22"/></svg></button>
    <button class="flat task run" aria-label="Seguridad"><svg viewBox="0 0 24 24"><circle cx="12" cy="12" r="12" fill="#961b20"/><circle cx="13" cy="9" r="3.500" fill="none" stroke="#fff" stroke-width="2.500"/><circle cx="11" cy="17" r="4" fill="none" stroke="#fff" stroke-width="3"/><path d="m6 5 7-4 2 3-5 3z" fill="#fff"/><path d="M14-3 21-6l7 3q0 8-7 11-7-3-7-11z" fill="#13a10e"/><path d="m18 0 2.500 2.500 4-4" fill="none" stroke="#fff" stroke-width="1.500"/></svg></button>
  </div>
  <button class="flat hidden-icons" aria-label="Iconos ocultos"><svg width="12" height="8"><path d="m1 6 5-5 5 5" fill="none" stroke="#fff" stroke-width="1.500"/></svg></button>
  <button class="flat stamp text-center">ESP<br>US</button>
  <div class="tray d-flex align-items-center">
    <svg width="18" height="18"><path d="M10 2.500H1.500v10h12V8M4 16.500h8M7.500 13v3M12.500 1.500h4v4h-4zM14.500 6v10h-3" fill="none" stroke="#fff" stroke-width="1.200"/></svg>
    <svg width="16" height="16"><path d="M1 5.500v4h2l4 4v-11l-4 3z" fill="none" stroke="#ddd"/><circle cx="10" cy="11" r="4.500" fill="#fff"/><path d="m8 9 4 4m0-4-4 4" stroke="#202020"/></svg>
    <svg width="17" height="14"><rect x="1.500" y="3.500" width="13" height="8" rx="1" fill="#ddd" stroke="#fff"/><path d="M15 6h2v4h-2z" fill="#fff"/><path d="M4 0 1 5h2L2 9l4-5H4l1-4z" fill="#fff" stroke="#202020" stroke-width=".5"/></svg>
  </div>
  <button class="flat stamp text-end">1:06 AM<br>3/14/2024</button>
  <button class="flat ms-2 pe-1 d-flex" aria-label="Notificaciones"><svg width="14" height="16"><path d="M1 12.500h12M2 12V7a5 5 0 0 1 10 0v5M5 13.500q2 2 4 0" fill="none" stroke="#fff" stroke-width="1.200"/></svg></button>
</footer>

<script src="https://cdn.jsdelivr.net/npm/bootstrap@5.3.0/dist/js/bootstrap.bundle.min.js"></script>
</body>
</html>
